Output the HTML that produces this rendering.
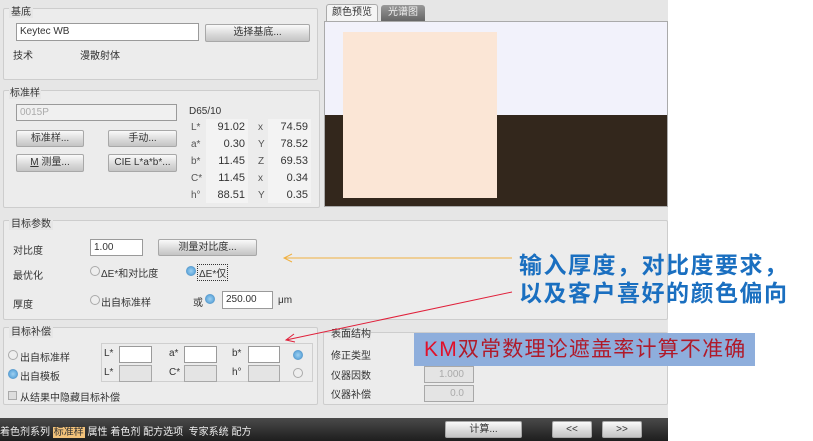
<!DOCTYPE html>
<html><head><meta charset="utf-8"><style>
*{box-sizing:border-box;margin:0;padding:0}
body{width:813px;height:441px;position:relative;background:#fff;font-family:"Liberation Sans","Noto Sans CJK SC",sans-serif;font-size:10px;color:#333;overflow:hidden}
.a{position:absolute;white-space:nowrap}
.app{position:absolute;left:0;top:0;width:668px;height:418px;background:#e6e6e6}
.g{position:absolute;border:1px solid #cdcdcd;background:#ececec;border-radius:2px}
.in{position:absolute;background:#fff;border:1px solid #9a9a9a;padding-left:3px;line-height:15px;font-size:10px}
.btn{position:absolute;border:1px solid #a8a8a8;background:linear-gradient(#fafafa,#d8d8d8 60%,#c4c4c4);text-align:center;font-size:10px;line-height:16px;color:#333;border-radius:2px}
.v{position:absolute;background:#f3f3f3;text-align:right;padding-right:3px;line-height:16px}
.dis{position:absolute;background:#e4e4e4;border:1px solid #a8a8a8}
.r{position:absolute;width:10px;height:10px;border-radius:50%;border:1px solid #aaa;background:#eee}
.r.on{background:radial-gradient(#9fd0f0,#4a9ad6);border-color:#5f9fd0}
</style></head><body>
<div class="app">
<div class="g" style="left:3px;top:8px;width:315px;height:72px"></div>
<div class="a" style="left:9px;top:3px;background:#e6e6e6;padding:0 2px">基底</div>
<div class="in" style="left:16px;top:23px;width:183px;height:18px">Keytec WB</div>
<div class="btn" style="left:205px;top:24px;width:105px;height:18px">选择基底...</div>
<div class="a" style="left:13px;top:47px">技术</div>
<div class="a" style="left:80px;top:47px">漫散射体</div>
<div class="g" style="left:3px;top:90px;width:317px;height:118px"></div>
<div class="a" style="left:9px;top:84px;background:#e6e6e6;padding:0 1px">标准样</div>
<div class="in" style="left:16px;top:104px;width:161px;height:17px;background:#f0f0f0;color:#aaa">0015P</div>
<div class="a" style="left:189px;top:106px">D65/10</div>
<div class="btn" style="left:16px;top:130px;width:68px;height:17px">标准样...</div>
<div class="btn" style="left:108px;top:130px;width:69px;height:17px">手动...</div>
<div class="btn" style="left:16px;top:154px;width:68px;height:18px"><u>M</u> 测量...</div>
<div class="btn" style="left:108px;top:154px;width:69px;height:18px">CIE L*a*b*...</div>
<div class="a" style="left:191px;top:119px;line-height:17px;color:#555">L*<br>a*<br>b*<br>C*<br>h°</div>
<div class="a" style="left:258px;top:119px;line-height:17px;color:#555">x<br>Y<br>Z<br>x<br>Y</div>
<div class="v" style="left:206px;top:119px;width:42px;height:84px;line-height:17px;font-size:11px">91.02<br>0.30<br>11.45<br>11.45<br>88.51</div>
<div class="v" style="left:268px;top:119px;width:43px;height:84px;line-height:17px;font-size:11px">74.59<br>78.52<br>69.53<br>0.34<br>0.35</div>
<div class="a" style="left:326px;top:4px;width:52px;height:17px;background:#f4f4f4;border:1px solid #aaa;border-bottom:none;border-radius:3px 3px 0 0;text-align:center;line-height:16px">颜色预览</div>
<div class="a" style="left:381px;top:5px;width:44px;height:16px;background:linear-gradient(#999,#666);color:#eee;border-radius:3px 3px 0 0;text-align:center;line-height:15px">光谱图</div>
<div class="a" style="left:324px;top:21px;width:344px;height:186px;border:1px solid #aaa;background:#f2f2fb">
<div class="a" style="left:0;top:93px;width:342px;height:91px;background:#33271c"></div>
<div class="a" style="left:18px;top:10px;width:154px;height:166px;background:#fbe6d6"></div>
</div>
<div class="g" style="left:3px;top:220px;width:665px;height:100px"></div>
<div class="a" style="left:9px;top:215px;background:#e6e6e6;padding:0 2px">目标参数</div>
<div class="a" style="left:13px;top:242px">对比度</div>
<div class="in" style="left:90px;top:239px;width:53px;height:17px">1.00</div>
<div class="btn" style="left:158px;top:239px;width:99px;height:17px">测量对比度...</div>
<div class="a" style="left:13px;top:267px">最优化</div>
<div class="r" style="left:90px;top:266px"></div><div class="a" style="left:101px;top:265px">ΔE*和对比度</div>
<div class="r on" style="left:186px;top:266px"></div><div class="a" style="left:197px;top:264px;border:1px dotted #333;padding:0 1px">ΔE*仅</div>
<div class="a" style="left:13px;top:296px">厚度</div>
<div class="r" style="left:90px;top:295px"></div><div class="a" style="left:101px;top:294px">出自标准样</div>
<div class="a" style="left:193px;top:294px">或</div>
<div class="r on" style="left:205px;top:294px"></div>
<div class="in" style="left:222px;top:291px;width:51px;height:18px;line-height:16px">250.00</div>
<div class="a" style="left:278px;top:295px">μm</div>
<div class="g" style="left:3px;top:327px;width:315px;height:78px"></div>
<div class="a" style="left:9px;top:323px;background:#e6e6e6;padding:0 2px">目标补偿</div>
<div class="a" style="left:101px;top:343px;width:212px;height:39px;border:1px solid #cfcfcf"></div>
<div class="r" style="left:8px;top:350px"></div><div class="a" style="left:20px;top:349px">出自标准样</div>
<div class="r on" style="left:8px;top:369px"></div><div class="a" style="left:20px;top:368px">出自模板</div>
<div class="a" style="left:104px;top:348px">L*</div><div class="in" style="left:119px;top:346px;width:33px;height:17px"></div>
<div class="a" style="left:169px;top:348px">a*</div><div class="in" style="left:184px;top:346px;width:33px;height:17px"></div>
<div class="a" style="left:232px;top:348px">b*</div><div class="in" style="left:248px;top:346px;width:32px;height:17px"></div>
<div class="r on" style="left:293px;top:350px"></div>
<div class="a" style="left:104px;top:367px">L*</div><div class="dis" style="left:119px;top:365px;width:33px;height:17px"></div>
<div class="a" style="left:169px;top:367px">C*</div><div class="dis" style="left:184px;top:365px;width:33px;height:17px"></div>
<div class="a" style="left:232px;top:367px">h°</div><div class="dis" style="left:248px;top:365px;width:32px;height:17px"></div>
<div class="r" style="left:293px;top:368px"></div>
<div class="a" style="left:8px;top:391px;width:9px;height:9px;border:1px solid #aaa;background:#ddd"></div>
<div class="a" style="left:20px;top:389px">从结果中隐藏目标补偿</div>
<div class="g" style="left:323px;top:332px;width:345px;height:73px"></div>
<div class="a" style="left:331px;top:325px;background:#e6e6e6">表面结构</div>
<div class="a" style="left:331px;top:347px">修正类型</div>
<div class="a" style="left:331px;top:367px">仪器因数</div>
<div class="a" style="left:331px;top:386px">仪器补偿</div>
<div class="dis" style="left:424px;top:366px;width:50px;height:17px;text-align:right;padding-right:9px;color:#aaa;line-height:15px">1.000</div>
<div class="dis" style="left:424px;top:385px;width:50px;height:17px;text-align:right;padding-right:9px;color:#aaa;line-height:15px">0.0</div>
</div>
<div class="a" style="left:0;top:418px;width:668px;height:23px;background:linear-gradient(#4a4a4a,#1e1e1e)"></div>
<div class="a" style="left:0;top:423px;color:#eee;font-size:10px">着色剂系列 <span style="background:#f2c27a;color:#333;padding:0 1px">标准样</span> 属性 着色剂 配方选项 &nbsp;专家系统 配方</div>
<div class="btn" style="left:445px;top:421px;width:77px;height:17px">计算...</div>
<div class="btn" style="left:552px;top:421px;width:40px;height:17px">&lt;&lt;</div>
<div class="btn" style="left:602px;top:421px;width:40px;height:17px">&gt;&gt;</div>
<svg class="a" style="left:0;top:0" width="813" height="441">
<line x1="284" y1="258" x2="512" y2="258" stroke="#f0b040" stroke-width="1"/>
<polyline points="292,254 284,258 292,262" fill="none" stroke="#f0b040"/>
<line x1="286" y1="340" x2="512" y2="292" stroke="#e0203a" stroke-width="1"/>
<polyline points="294,334 286,340 295,342" fill="none" stroke="#e0203a"/>
</svg>
<div class="a" style="left:519px;top:251px;font-size:23px;font-weight:bold;color:#1a6fc0;line-height:28px;letter-spacing:1.5px">输入厚度，对比度要求，<br>以及客户喜好的颜色偏向</div>
<div class="a" style="left:414px;top:333px;width:341px;height:33px;background:#8eaedc;color:#b01a2a;font-size:21px;line-height:33px;padding-left:10px;letter-spacing:1.2px"><span style="color:#e0102a">KM</span>双常数理论遮盖率计算不准确</div>
</body></html>
